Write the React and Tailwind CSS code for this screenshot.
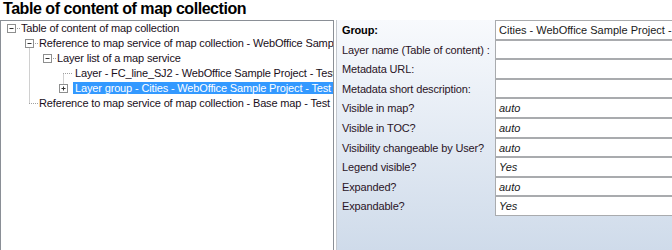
import React from "react";

const treeRows = [
  { text: "Table of content of map collection", pad: 20 },
  { text: "Reference to map service of map collection - WebOffice Sample Project - Test", pad: 38 },
  { text: "Layer list of a map service", pad: 56 },
  { text: "Layer - FC_line_SJ2 - WebOffice Sample Project - Test", pad: 74 },
  { text: "Layer group - Cities - WebOffice Sample Project - Test", pad: 74, selected: true },
  { text: "Reference to map service of map collection - Base map - Test", pad: 38 },
];

const props = [
  { label: "Group:", value: "Cities - WebOffice Sample Project - Test", bold: true },
  { label: "Layer name (Table of content) :", value: "" },
  { label: "Metadata URL:", value: "" },
  { label: "Metadata short description:", value: "" },
  { label: "Visible in map?", value: "auto", italic: true },
  { label: "Visible in TOC?", value: "auto", italic: true },
  { label: "Visibility changeable by User?", value: "auto", italic: true },
  { label: "Legend visible?", value: "Yes", italic: true },
  { label: "Expanded?", value: "auto", italic: true },
  { label: "Expandable?", value: "Yes", italic: true },
];

// expander box, cx/cy are the centre
const Box = ({ cx, cy, plus }) => (
  <g>
    <rect x={cx - 4} y={cy - 4} width="8" height="8" fill="#fff" stroke="#8e8f8f" />
    <line x1={cx - 2} y1={cy} x2={cx + 2} y2={cy} stroke="#333" />
    {plus && <line x1={cx} y1={cy - 2} x2={cx} y2={cy + 2} stroke="#333" />}
  </g>
);

const TreeLines = () => {
  const y = (i) => 7.5 + i * 15;
  const dot = { stroke: "#a0a0a0", strokeDasharray: "1 1" };
  return (
    <svg className="absolute left-0 top-0" width="330" height="100">
      {/* vertical: level 2 siblings */}
      <line x1="28.5" y1={y(1)} x2="28.5" y2={y(5)} {...dot} />
      {/* vertical: level 4 siblings */}
      <line x1="62.5" y1={y(3)} x2="62.5" y2={y(4)} {...dot} />
      {/* stubs */}
      <line x1="14" y1={y(0)} x2="19" y2={y(0)} {...dot} />
      <line x1="32" y1={y(1)} x2="37" y2={y(1)} {...dot} />
      <line x1="50" y1={y(2)} x2="55" y2={y(2)} {...dot} />
      <line x1="62" y1={y(3)} x2="72" y2={y(3)} {...dot} />
      <line x1="28" y1={y(5)} x2="37" y2={y(5)} {...dot} />
      <Box cx={10.5} cy={y(0)} />
      <Box cx={28.5} cy={y(1)} />
      <Box cx={46.5} cy={y(2)} />
      <Box cx={62.5} cy={y(4)} plus />
    </svg>
  );
};

export default function App() {
  return (
    <div className="w-[672px] h-[250px] overflow-hidden bg-white font-['Liberation_Sans',Arial,sans-serif] text-[#1a1a1a]">
      <div className="h-[20px] pl-[3px] text-[16px] leading-[18px] font-bold text-black tracking-[-0.45px]">
        Table of content of map collection
      </div>
      <div className="flex h-[230px]">
        {/* tree */}
        <div className="relative w-[334px] shrink-0 border-l border-t border-r border-[#8a8f96] bg-white overflow-hidden">
          <TreeLines />
          <div className="relative">
            {treeRows.map((r, i) => (
              <div key={i} className="h-[15px] whitespace-nowrap text-[11px] leading-[15px] tracking-[-0.15px]" style={{ paddingLeft: r.pad - 2 }}>
                <span className={r.selected ? "bg-[#3399ff] text-white px-[2px] pr-[3px]" : "px-[2px] text-[#1a0f1a]"}>
                  {r.text}
                </span>
              </div>
            ))}
          </div>
        </div>
        {/* splitter */}
        <div className="w-[2px] bg-white" />
        <div className="w-[1px] bg-[#c4c8ce]" />
        {/* properties */}
        <div className="flex-1 bg-gradient-to-b from-[#f8fafd] to-[#cfdbea] overflow-hidden">
          {props.map((p, i) => (
            <div key={i} className="flex h-[19.6px]">
              <div className={"w-[158px] shrink-0 pl-[5px] pt-[1px] text-[11px] leading-[19.6px] whitespace-nowrap tracking-[-0.15px] " + (p.bold ? "font-bold text-black" : "text-[#2a1426]")}>
                {p.label}
              </div>
              <div className="w-[300px] shrink-0 border border-[#a9abae] bg-white pl-[3px] text-[11px] leading-[19px] whitespace-nowrap overflow-hidden">
                <span className={p.italic ? "italic" : ""}>{p.value}</span>
              </div>
            </div>
          ))}
        </div>
      </div>
    </div>
  );
}
